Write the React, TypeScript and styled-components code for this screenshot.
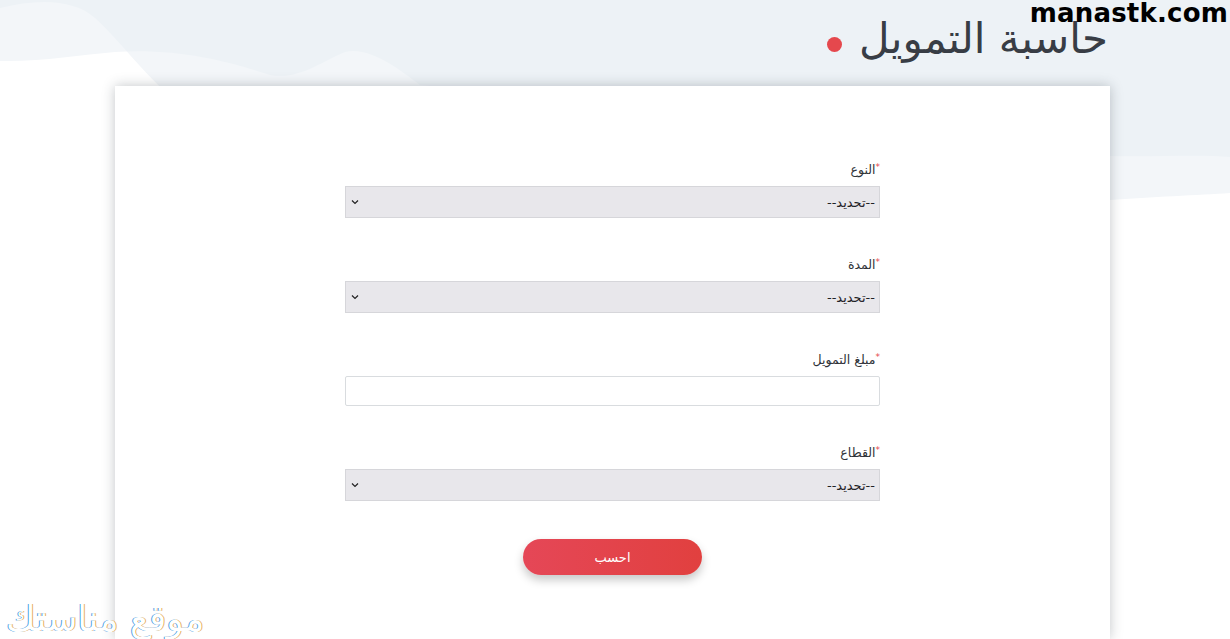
import React from "react";
import styled, { createGlobalStyle } from "styled-components";

/* --- Global --- */

const GlobalStyle = createGlobalStyle`
  html, body {
    margin: 0;
    padding: 0;
    background: #ffffff;
    overflow: hidden;
  }
  * {
    box-sizing: border-box;
  }
`;

/* --- Styled Components --- */

const Page = styled.div`
  position: relative;
  width: 1230px;
  height: 639px;
  overflow: hidden;
  font-family: "DejaVu Sans", "Noto Sans", sans-serif;
  display: flex;
  flex-direction: column;
`;

const Waves = styled.svg`
  position: absolute;
  top: 0;
  left: 0;
  width: 1230px;
  height: 639px;
  z-index: 0;
`;

const Header = styled.header`
  position: relative;
  z-index: 1;
  height: 86px;
  display: flex;
  align-items: center;
  justify-content: flex-start;
  direction: rtl;
  padding: 0 122px 8px 0;
  gap: 17px;
`;

const Title = styled.h1`
  margin: 0;
  font-size: 42px;
  font-weight: 400;
  color: #383d45;
  line-height: 1;
`;

const Dot = styled.span`
  width: 15px;
  height: 15px;
  border-radius: 50%;
  background: #e5484d;
  margin-top: 10px;
`;

const SiteMark = styled.div`
  position: absolute;
  top: 0;
  right: 2px;
  z-index: 3;
  font-family: "DejaVu Sans", "Liberation Sans", sans-serif;
  font-weight: 700;
  font-size: 26px;
  line-height: 26px;
  letter-spacing: 0.2px;
  color: #000000;
`;

const Card = styled.main`
  position: relative;
  z-index: 1;
  flex: 1;
  margin: 0 120px 0 115px;
  background: #ffffff;
  box-shadow: 0 0 12px rgba(40, 50, 60, 0.28);
  padding-top: 75px;
  display: flex;
  justify-content: center;
`;

const Form = styled.form`
  width: 535px;
  direction: rtl;
  display: flex;
  flex-direction: column;
  gap: 38px;
`;

const Field = styled.div`
  display: flex;
  flex-direction: column;
  gap: 7px;
`;

const Label = styled.label`
  font-size: 12.5px;
  line-height: 18px;
  color: #2f3338;
  display: flex;
  align-items: flex-start;
`;

const Req = styled.span`
  color: #e5484d;
  font-size: 9px;
  line-height: 12px;
`;

const SelectWrap = styled.div`
  position: relative;
  height: 32px;
`;

const Select = styled.select`
  appearance: none;
  width: 100%;
  height: 32px;
  border: 1px solid #d6d6da;
  background: #e8e7eb;
  color: #1f2226;
  font-family: "DejaVu Sans", sans-serif;
  font-size: 13px;
  padding: 0 4px 0 30px;
  direction: rtl;
  outline: none;
`;

const Chevron = styled.span`
  position: absolute;
  left: 6px;
  top: 50%;
  transform: translateY(-50%);
  display: flex;
  pointer-events: none;
`;

const Input = styled.input`
  height: 30px;
  border: 1px solid #d9dcdf;
  border-radius: 2px;
  background: #ffffff;
  outline: none;
  font-size: 13px;
  direction: rtl;
  padding: 0 8px;
`;

const Actions = styled.div`
  display: flex;
  justify-content: center;
`;

const CalcButton = styled.button`
  width: 179px;
  height: 36px;
  border: none;
  border-radius: 18px;
  background: linear-gradient(90deg, #e54757, #e1403f);
  color: #ffffff;
  font-family: "DejaVu Sans", sans-serif;
  font-size: 13px;
  box-shadow: 0 5px 10px rgba(0, 0, 0, 0.22);
  cursor: pointer;
`;

const Watermark = styled.div`
  position: absolute;
  left: 6px;
  bottom: 0;
  z-index: 3;
  font-family: "DejaVu Sans", sans-serif;
  font-size: 36px;
  letter-spacing: 3px;
  direction: rtl;
  color: #ffffff;
  text-shadow: -1px 0 #2f8fe0, 1px 0 #e3a243;
  opacity: 0.85;
`;

/* --- Data --- */

const selects = ["النوع", "المدة"];

/* --- Component --- */

const ChevronIcon = () => (
  <svg width="8" height="5" viewBox="0 0 8 5">
    <path d="M1 1 L4 4 L7 1" fill="none" stroke="#222" strokeWidth="1.2" />
  </svg>
);

const SelectField: React.FC<{ label: string }> = ({ label }) => (
  <Field>
    <Label>
      <Req>*</Req>
      {label}
    </Label>
    <SelectWrap>
      <Select defaultValue="">
        <option value="">--تحديد--</option>
      </Select>
      <Chevron>
        <ChevronIcon />
      </Chevron>
    </SelectWrap>
  </Field>
);

const back =
  "M0,8 C40,-2 75,0 95,18 C125,45 150,85 200,120 L1110,200 C1150,197 1200,195 1230,193 L1230,639 L0,639 Z";
const front =
  "M0,61 C40,62 80,55 115,52 C180,48 230,62 270,75 C300,80 320,62 345,52 C370,46 400,70 420,85 L1110,156 C1160,157 1200,154 1230,157 L1230,639 L0,639 Z";

const App: React.FC = () => {
  return (
    <Page>
      <GlobalStyle />
      <Waves viewBox="0 0 1230 639" preserveAspectRatio="none">
        <defs>
          <clipPath id="backClip">
            <path d={back} />
          </clipPath>
        </defs>
        <rect x="0" y="0" width="1230" height="639" fill="#edf2f6" />
        <path d={back} fill="#f3f6f9" />
        <path d={front} fill="#f3f6f9" />
        <path d={front} fill="#ffffff" clipPath="url(#backClip)" />
      </Waves>

      <SiteMark>manastk.com</SiteMark>

      <Header>
        <Title>حاسبة التمويل</Title>
        <Dot />
      </Header>

      <Card>
        <Form onSubmit={(e) => e.preventDefault()}>
          {selects.map((s) => (
            <SelectField key={s} label={s} />
          ))}

          <Field>
            <Label>
              <Req>*</Req>
              مبلغ التمويل
            </Label>
            <Input type="text" />
          </Field>

          <SelectField label="القطاع" />

          <Actions>
            <CalcButton type="submit">احسب</CalcButton>
          </Actions>
        </Form>
      </Card>

      <Watermark>موقع مناستك</Watermark>
    </Page>
  );
};

export default App;
